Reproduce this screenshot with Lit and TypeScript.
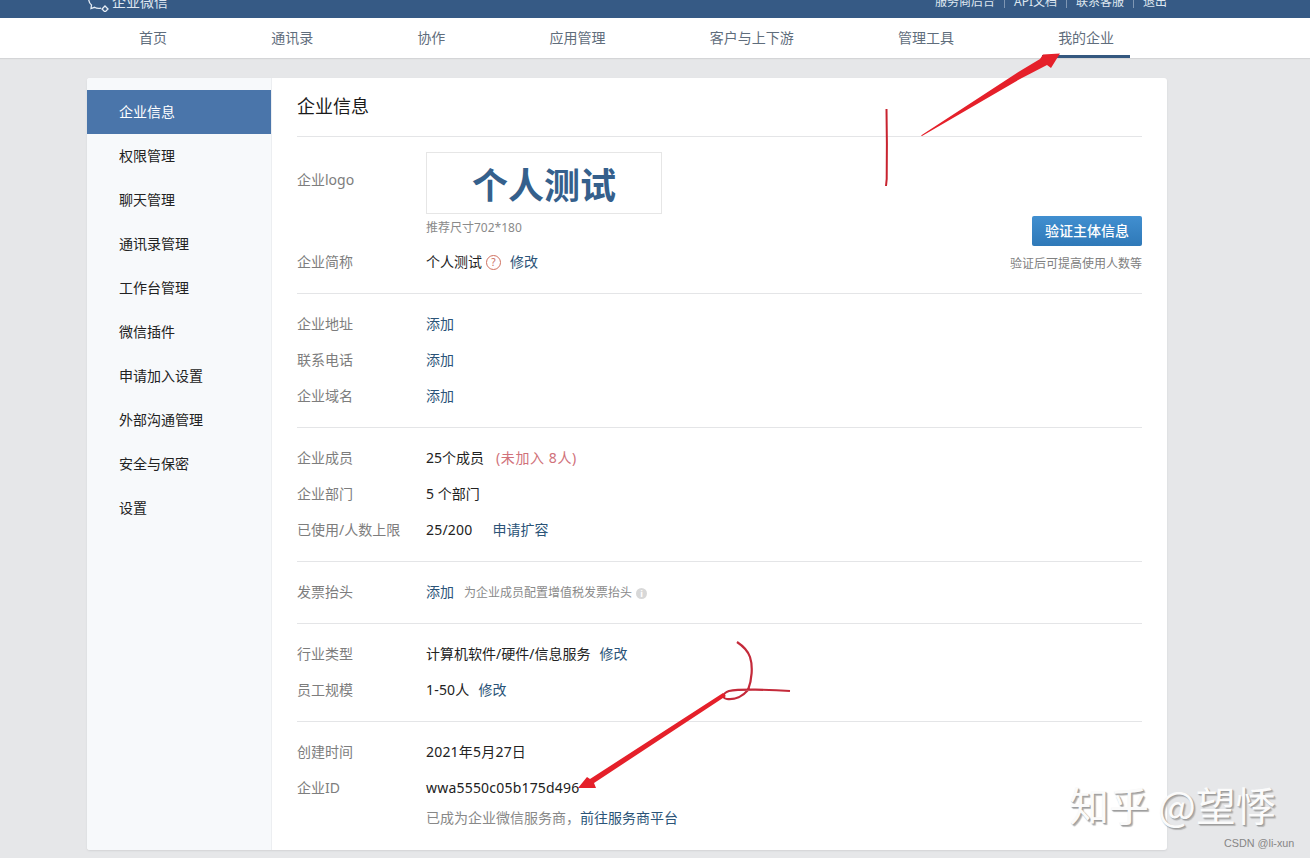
import { LitElement, html, css, svg } from "lit";
import { customElement } from "lit/decorators.js";

const NAV = ["首页", "通讯录", "协作", "应用管理", "客户与上下游", "管理工具", "我的企业"];
const SIDE = ["企业信息", "权限管理", "聊天管理", "通讯录管理", "工作台管理", "微信插件", "申请加入设置", "外部沟通管理", "安全与保密", "设置"];

@customElement("app-root")
export class AppRoot extends LitElement {
  static styles = css`
    :host { display: block; position: relative; height: 858px; overflow: hidden; background: #e6e7e9; color: #222;
      font: 14px/20px "Noto Sans", "Noto Sans CJK SC", sans-serif; }
    a { color: #2b5478; text-decoration: none; }
    .top { height: 18px; background: #365a85; overflow: hidden; padding: 0 143px 0 87px; }
    .top-in { display: flex; align-items: center; justify-content: space-between; height: 20px; margin-top: -8px; color: #dfe7f0; }
    .brand { display: flex; align-items: center; gap: 2px; font-size: 14px; }
    .links { display: flex; align-items: center; font-size: 12px; }
    .links i { width: 1px; height: 12px; background: #7f97b4; margin: 0 9px; }
    .nav { height: 40px; background: #fff; display: flex; padding-left: 123px; gap: 72.2px; box-shadow: 0 1px 1px #d4d5d7; position: relative; }
    .nav a { height: 37px; line-height: 40px; padding: 0 16px; color: #5f6d7c; border-bottom: 3px solid transparent; }
    .nav a.on { border-bottom-color: #34587f; }
    .card { margin: 20px 0 0 87px; width: 1080px; height: 772px; background: #fff; border-radius: 3px; display: flex; box-shadow: 0 1px 2px #d2d3d6; overflow: hidden; }
    .side { width: 184px; background: #f7f9fb; border-right: 1px solid #eceef1; padding-top: 12px; flex: none; }
    .side div { height: 44px; line-height: 44px; padding-left: 32px; color: #222; }
    .side div.on { background: #4a75aa; color: #fff; }
    .main { flex: 1; padding: 0 25px; }
    .title { height: 58px; line-height: 56px; font-size: 18px; color: #1b1b1b; border-bottom: 1px solid #e4e5e7; }
    .sec { padding: 12px 0 13px; border-bottom: 1px solid #e4e5e7; }
    .sec.last { border-bottom: 0; }
    .row { display: flex; height: 36px; align-items: center; }
    .row > label { width: 129px; flex: none; color: #7d7d7d; }
    .row a { margin-left: 9px; }
    .row a.first { margin-left: 0; }
    .row a.wide { margin-left: 20px; }
    .lat { letter-spacing: 0.2px; }
    .sec.first { display: flex; justify-content: space-between; padding: 15px 0 13px; }
    .logo-row { display: flex; }
    .logo-row label { width: 129px; color: #7d7d7d; padding-top: 18px; }
    .logo { box-sizing: border-box; width: 236px; height: 62px; padding-top: 5px; border: 1px solid #e6e6e6; display: flex; align-items: center; justify-content: center;
      font-size: 36px; line-height: 44px; font-weight: 700; color: #35608c; }
    .hint { font-size: 12px; line-height: 18px; color: #8a8a8a; margin: 5px 0 0 129px; }
    .name { height: 36px; margin-top: 7px; }
    .qm { width: 13px; height: 13px; border: 1px solid #d0705f; border-radius: 50%; margin-left: 4px; color: #c96a5c; font-size: 10px; line-height: 13px; text-align: center; }
    .verify { display: flex; flex-direction: column; align-items: flex-end; padding-top: 64px; }
    .btn { width: 110px; height: 30px; line-height: 30px; text-align: center; color: #fff; border-radius: 2px; background: linear-gradient(#418fd0, #2f79b8); font-weight: 500; }
    .cap { font-size: 12px; line-height: 18px; color: #808080; margin-top: 9px; }
    .warn { color: #d0717a; margin-left: 12px; letter-spacing: 0.6px; }
    .note { font-size: 12px; color: #8a8a8a; margin-left: 10px; padding-top: 2px; }
    .info { width: 11px; height: 11px; border-radius: 50%; background: #d8d8d8; color: #fff; font-size: 9px; line-height: 11px; text-align: center; margin: 2px 0 0 4px; font-weight: 700; }
    .row.sub { height: 24px; margin-top: 0; }
    .sub span { color: #888; }
    .ink { position: absolute; left: 0; top: 0; pointer-events: none; }
    .mark { position: absolute; left: 1069px; top: 774px; font: 40px/60px "Noto Sans CJK SC", sans-serif; color: #fbfbfb; white-space: nowrap;
      text-shadow: 1px 1px 1px #9c9c9c, 2px 2px 1px #b8b8b8; }
    .csdn { position: absolute; left: 1224px; top: 836px; font: 10.800px/14px "Liberation Sans", sans-serif; color: #868686; white-space: nowrap; }
  `;

  private row(label: string, body: unknown) {
    return html`<div class="row"><label>${label}</label>${body}</div>`;
  }

  render() {
    return html`
      <div class="top"><div class="top-in">
        <div class="brand">
          <svg width="23" height="20" viewBox="0 0 23 20" fill="none" stroke="#e6edf5" stroke-width="1.300">
            <path d="M1.500 5C1.500 10 3 12 4.500 13L4 16.500 7.500 15.300C9.500 16.500 11.500 16.700 14 16.200"/>
            <path d="M18 14l3 3-3 3-3-3z"/>
          </svg>
          <span>企业微信</span>
        </div>
        <div class="links"><span>服务商后台</span><i></i><span>API文档</span><i></i><span>联系客服</span><i></i><span>退出</span></div>
      </div></div>
      <div class="nav">${NAV.map((n, i) => html`<a class=${i === 6 ? "on" : ""}>${n}</a>`)}</div>
      <div class="card">
        <div class="side">${SIDE.map((s, i) => html`<div class=${i === 0 ? "on" : ""}>${s}</div>`)}</div>
        <div class="main">
          <div class="title">企业信息</div>
          <div class="sec first">
            <div>
              <div class="logo-row"><label>企业logo</label><div class="logo">个人测试</div></div>
              <div class="hint">推荐尺寸702*180</div>
              <div class="row name"><label>企业简称</label><span>个人测试</span><span class="qm">?</span><a>修改</a></div>
            </div>
            <div class="verify"><div class="btn">验证主体信息</div><div class="cap">验证后可提高使用人数等</div></div>
          </div>
          <div class="sec">
            ${this.row("企业地址", html`<a class="first">添加</a>`)}
            ${this.row("联系电话", html`<a class="first">添加</a>`)}
            ${this.row("企业域名", html`<a class="first">添加</a>`)}
          </div>
          <div class="sec">
            ${this.row("企业成员", html`<span>25个成员</span><span class="warn">(未加入 8人)</span>`)}
            ${this.row("企业部门", html`<span>5 个部门</span>`)}
            ${this.row("已使用/人数上限", html`<span class="lat">25/200</span><a class="wide">申请扩容</a>`)}
          </div>
          <div class="sec">
            ${this.row("发票抬头", html`<a class="first">添加</a><span class="note">为企业成员配置增值税发票抬头</span><span class="info">i</span>`)}
          </div>
          <div class="sec">
            ${this.row("行业类型", html`<span>计算机软件/硬件/信息服务</span><a>修改</a>`)}
            ${this.row("员工规模", html`<span class="lat">1-50人</span><a>修改</a>`)}
          </div>
          <div class="sec last">
            ${this.row("创建时间", html`<span class="lat">2021年5月27日</span>`)}
            ${this.row("企业ID", html`<span class="lat">wwa5550c05b175d496</span>`)}
            <div class="row sub"><label></label><span>已成为企业微信服务商，</span><a class="first">前往服务商平台</a></div>
          </div>
        </div>
      </div>
      <svg class="ink" width="1310" height="858" viewBox="0 0 1310 858" fill="none">
        ${svg`
          <path d="M886.500 109c.5 25 .5 50 .2 70l-.7 7" stroke="#c8232f" stroke-width="2"/>
          <path d="M921 135.500L1020 71 1040 59 1043 54.500 1060 53.500 1051 68 1047 65 1020 79 922 136z" fill="#e5202a"/>
          <path d="M737 642C743 646 748 651 750 657 753 666 752 680 748 690 743 696 735 700 727 699 721 698 723 693 729 691 738 689 770 689.500 790 691" stroke="#c42a3a" stroke-width="2.200"/>
          <path d="M578 788L587 777 590 779 723 693 726 696 594 783 596 788z" fill="#e5202a"/>
        `}
      </svg>
      <div class="mark">知乎 @望悸</div>
      <div class="csdn">CSDN @li-xun</div>
    `;
  }
}
